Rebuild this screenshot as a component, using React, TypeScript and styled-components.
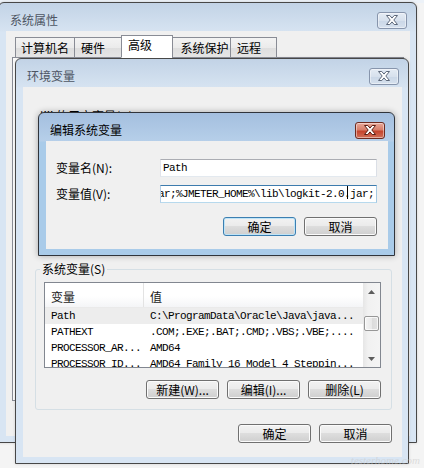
import React from "react";
import styled, { createGlobalStyle } from "styled-components";

const GlobalStyle = createGlobalStyle`
  html, body {
    margin: 0;
    padding: 0;
    background: #f4f4f4;
  }
  body {
    font-family: "Noto Sans CJK SC", "Liberation Sans", sans-serif;
    font-size: 12px;
    color: #000;
  }
  * {
    box-sizing: border-box;
  }
`;

const MONO = `"Liberation Mono", "DejaVu Sans Mono", monospace`;

const Desktop = styled.div`
  position: relative;
  width: 424px;
  height: 468px;
  overflow: hidden;
  background: linear-gradient(#edf2f8 0, #edf2f8 3px, #f4f4f4 3px);
`;

// windows sit on a free canvas, so they are placed by coordinates
const Frame = styled.div<{ $x: number; $y: number; $w: number; $h: number; $active?: boolean }>`
  position: absolute;
  left: ${(p) => p.$x}px;
  top: ${(p) => p.$y}px;
  width: ${(p) => p.$w}px;
  height: ${(p) => p.$h}px;
  display: flex;
  flex-direction: column;
  padding: 0 6px 6px 7px;
  border: 1px solid ${(p) => (p.$active ? "#30343b" : "#474747")};
  border-radius: 6px 6px 0 0;
  background: ${(p) =>
    p.$active
      ? "linear-gradient(#a4bfdf 0, #b6cfe9 28px, #a9cbe9 29px, #a9cbe9 100%)"
      : "linear-gradient(#c2d3e6 0, #d6e3f1 28px, #d8e5f3 29px, #d8e5f3 100%)"};
  box-shadow: ${(p) => (p.$active ? "0 0 6px rgba(0, 0, 0, 0.3)" : "0 0 3px rgba(0, 0, 0, 0.15)")};
`;

const TitleBar = styled.div`
  flex: none;
  height: 28px;
  display: flex;
  align-items: center;
  justify-content: space-between;
  padding: 6px 3px 0 4px;
`;

const Title = styled.span<{ $active?: boolean }>`
  font-size: 12px;
  line-height: 14px;
  color: ${(p) => (p.$active ? "#000" : "#4d5563")};
`;

const CloseBtn = styled.div<{ $active?: boolean }>`
  width: 30px;
  height: 17px;
  display: flex;
  align-items: center;
  justify-content: center;
  border-radius: 3px;
  border: 1px solid ${(p) => (p.$active ? "#6d2a1f" : "#8795ac")};
  background: ${(p) =>
    p.$active
      ? "linear-gradient(#e8a899 0, #d77e6a 45%, #c5442d 55%, #d0705a 100%)"
      : "linear-gradient(#e4ebf4 0, #d7e1ed 50%, #cad7e7 51%, #d6e1ee 100%)"};
  box-shadow: inset 0 0 0 1px rgba(255, 255, 255, 0.45);
`;

const Client = styled.div`
  flex: 1;
  min-height: 0;
  display: flex;
  flex-direction: column;
  overflow: hidden;
  background: #f0f0f0;
`;

/* ---- 系统属性 ---- */

const TabRow = styled.div`
  position: relative;
  z-index: 1;
  display: flex;
  align-items: flex-end;
  height: 23px;
  margin: 4px 0 -1px 9px;
`;

const Tab = styled.div<{ $w: number; $selected?: boolean }>`
  width: ${(p) => p.$w}px;
  height: ${(p) => (p.$selected ? 23 : 21)}px;
  display: flex;
  align-items: center;
  justify-content: ${(p) => (p.$w > 55 ? "center" : "flex-start")};
  padding: 0 0 ${(p) => (p.$selected ? 3 : 0)}px 6px;
  margin-left: -1px;
  border: 1px solid #898c95;
  border-bottom-color: ${(p) => (p.$selected ? "#fff" : "#898c95")};
  background: ${(p) => (p.$selected ? "#fff" : "linear-gradient(#f3f3f3, #ebebeb 50%, #dedede 51%, #e5e5e5)")};
  font-size: 12px;
  line-height: 14px;
  &:first-child {
    margin-left: 0;
    padding-left: 0;
  }
`;

const TabPanel = styled.div`
  height: 344px;
  margin: 0 6px;
  border: 1px solid #898c95;
  background: #fcfcfc;
`;

/* ---- 环境变量 ---- */

const EnvBody = styled.div`
  display: flex;
  flex-direction: column;
  padding: 22px 10px 0 12px;
`;

const UserSection = styled.div`
  height: 153px;
  padding-left: 5px;
  font-size: 12px;
  line-height: 14px;
`;

const Group = styled.fieldset`
  margin: 0;
  min-width: 0;
  padding: 6px 10px 10px 8px;
  border: 1px solid #d5dfe5;
  border-radius: 3px;
`;

const GroupLegend = styled.legend`
  margin-left: -4px;
  padding: 0 2px;
  font-size: 12px;
  line-height: 14px;
`;

const ListView = styled.div`
  height: 86px;
  display: flex;
  border: 1px solid #828790;
  background: #fff;
  overflow: hidden;
`;

const ListMain = styled.div`
  flex: 1;
  min-width: 0;
  display: flex;
  flex-direction: column;
`;

const HeaderRow = styled.div`
  flex: none;
  height: 25px;
  display: grid;
  grid-template-columns: 99px 1fr;
  background: linear-gradient(#fff 0, #fff 55%, #f4f5f7 100%);
  border-bottom: 1px solid #eaeaea;
`;

const HeaderCell = styled.div`
  display: flex;
  align-items: center;
  padding: 2px 0 0 6px;
  font-size: 12px;
  color: #1a1a1a;
  &:first-child {
    border-right: 1px solid #e3e3e3;
  }
`;

const Row = styled.div<{ $selected?: boolean }>`
  flex: none;
  height: 16px;
  display: grid;
  grid-template-columns: 99px 1fr;
  background: ${(p) => (p.$selected ? "#ededed" : "transparent")};
`;

const Cell = styled.div`
  padding-left: 6px;
  font-family: ${MONO};
  font-size: 11px;
  letter-spacing: -0.6px;
  line-height: 16px;
  white-space: nowrap;
  overflow: hidden;
`;

const ScrollBar = styled.div`
  flex: none;
  width: 17px;
  display: flex;
  flex-direction: column;
  background: linear-gradient(90deg, #e6e6e6, #f1f1f1 30%, #f4f4f4);
`;

const Arrow = styled.div`
  flex: none;
  height: 17px;
  display: flex;
  align-items: center;
  justify-content: center;
`;

const Track = styled.div`
  flex: 1;
`;

const Thumb = styled.div<{ $offset: number }>`
  height: 15px;
  margin: ${(p) => p.$offset}px 1px 0;
  border: 1px solid #979797;
  border-radius: 2px;
  background: linear-gradient(90deg, #f4f4f4, #e9e9e9 50%, #dbdbdb 51%, #e2e2e2);
  box-shadow: inset 0 0 0 1px rgba(255, 255, 255, 0.7);
`;

const ButtonRow = styled.div<{ $top: number }>`
  display: flex;
  justify-content: flex-end;
  gap: 8px;
  margin-top: ${(p) => p.$top}px;
`;

const PushButton = styled.button<{ $default?: boolean }>`
  width: 73px;
  height: 19px;
  padding: 0;
  display: flex;
  align-items: center;
  justify-content: center;
  border: 1px solid ${(p) => (p.$default ? "#3c7fb1" : "#707070")};
  border-radius: 3px;
  background: linear-gradient(#f2f2f2 0%, #ebebeb 45%, #dddddd 50%, #cfcfcf 100%);
  box-shadow: inset 0 0 0 1px ${(p) => (p.$default ? "#bfe4f7" : "#fbfbfb")};
  font-family: "Noto Sans CJK SC", sans-serif;
  font-size: 12px;
  line-height: 14px;
  color: #000;
`;

/* ---- 编辑系统变量 ---- */

const EditBody = styled.div`
  display: flex;
  flex-direction: column;
  gap: 8px;
  padding: 18px 11px 0 10px;
`;

const FieldRow = styled.div`
  display: flex;
  align-items: center;
`;

const FieldLabel = styled.span`
  width: 104px;
  font-size: 12px;
  line-height: 14px;
`;

const TextBox = styled.div<{ $focused?: boolean }>`
  width: 217px;
  height: 18px;
  padding-left: 2px;
  border: 1px solid;
  border-color: ${(p) => (p.$focused ? "#3d7bad #a4c9e3 #b7d9ed #b5cfe7" : "#abadb3 #dbdfe6 #e3e9ef #e2e3ea")};
  background: #fff;
  font-family: ${MONO};
  font-size: 11px;
  letter-spacing: -0.6px;
  line-height: 16px;
  white-space: nowrap;
  overflow: hidden;
`;

const ScrolledText = styled.span`
  margin-left: -5px;
`;

const Caret = styled.span`
  display: inline-block;
  width: 1px;
  height: 13px;
  margin: 0 -4px 0 3px;
  vertical-align: -2px;
  background: #000;
`;

const Watermark = styled.div`
  position: absolute;
  right: 4px;
  bottom: 2px;
  font-family: "Liberation Serif", serif;
  font-style: italic;
  font-size: 11px;
  color: rgba(200, 200, 200, 0.55);
`;

const CloseGlyph = ({ active }: { active?: boolean }) => (
  <svg width="12" height="10" viewBox="0 0 12 10">
    <path
      d="M0.5 0.5h3.3l2.2 2.6 2.2-2.6h3.3l-3.7 4.5 3.7 4.5h-3.3l-2.2-2.6-2.2 2.6h-3.3l3.7-4.5z"
      fill="#fff"
      stroke={active ? "#5a1d13" : "#5d687a"}
      strokeWidth="1"
      strokeLinejoin="round"
    />
  </svg>
);

const ArrowGlyph = ({ down }: { down?: boolean }) => (
  <svg width="7" height="4" viewBox="0 0 7 4">
    <path d={down ? "M0 0h7L3.5 4z" : "M3.5 0L7 4H0z"} fill="#5c5c5c" />
  </svg>
);

type WinProps = {
  x: number;
  y: number;
  w: number;
  h: number;
  title: string;
  active?: boolean;
  children?: React.ReactNode;
};

const Window = ({ x, y, w, h, title, active, children }: WinProps) => (
  <Frame $x={x} $y={y} $w={w} $h={h} $active={active}>
    <TitleBar>
      <Title $active={active}>{title}</Title>
      <CloseBtn $active={active}>
        <CloseGlyph active={active} />
      </CloseBtn>
    </TitleBar>
    <Client>{children}</Client>
  </Frame>
);

const tabs = [
  { label: "计算机名", w: 60 },
  { label: "硬件", w: 48 },
  { label: "高级", w: 52, selected: true },
  { label: "系统保护", w: 59 },
  { label: "远程", w: 47 },
];

const sysVars = [
  { name: "Path", value: "C:\\ProgramData\\Oracle\\Java\\java...", selected: true },
  { name: "PATHEXT", value: ".COM;.EXE;.BAT;.CMD;.VBS;.VBE;...." },
  { name: "PROCESSOR_AR...", value: "AMD64" },
  { name: "PROCESSOR_ID...", value: "AMD64 Family 16 Model 4 Steppin..." },
];

const App = () => {
  return (
    <Desktop>
      <GlobalStyle />

      <Window x={-2} y={2} w={419} h={441} title="系统属性">
        <TabRow>
          {tabs.map((t) => (
            <Tab key={t.label} $w={t.w} $selected={t.selected}>
              {t.label}
            </Tab>
          ))}
        </TabRow>
        <TabPanel />
      </Window>

      <Window x={15} y={58} w={394} h={406} title="环境变量">
        <EnvBody>
          <UserSection>liji 的用户变量(U)</UserSection>
          <Group>
            <GroupLegend>系统变量(S)</GroupLegend>
            <ListView>
              <ListMain>
                <HeaderRow>
                  <HeaderCell>变量</HeaderCell>
                  <HeaderCell>值</HeaderCell>
                </HeaderRow>
                {sysVars.map((v) => (
                  <Row key={v.name} $selected={v.selected}>
                    <Cell>{v.name}</Cell>
                    <Cell>{v.value}</Cell>
                  </Row>
                ))}
              </ListMain>
              <ScrollBar>
                <Arrow>
                  <ArrowGlyph />
                </Arrow>
                <Track>
                  <Thumb $offset={16} />
                </Track>
                <Arrow>
                  <ArrowGlyph down />
                </Arrow>
              </ScrollBar>
            </ListView>
            <ButtonRow $top={12}>
              <PushButton>新建(W)...</PushButton>
              <PushButton>编辑(I)...</PushButton>
              <PushButton>删除(L)</PushButton>
            </ButtonRow>
          </Group>
          <ButtonRow $top={14}>
            <PushButton>确定</PushButton>
            <PushButton>取消</PushButton>
          </ButtonRow>
        </EnvBody>
      </Window>

      <Window x={38} y={112} w={357} h={144} title="编辑系统变量" active>
        <EditBody>
          <FieldRow>
            <FieldLabel>变量名(N):</FieldLabel>
            <TextBox>Path</TextBox>
          </FieldRow>
          <FieldRow>
            <FieldLabel>变量值(V):</FieldLabel>
            <TextBox $focused>
              <ScrolledText>
                {"ar;%JMETER_HOME%\\lib\\logkit-2.0"}
                <Caret />
                {".jar;"}
              </ScrolledText>
            </TextBox>
          </FieldRow>
          <ButtonRow $top={6}>
            <PushButton $default>确定</PushButton>
            <PushButton>取消</PushButton>
          </ButtonRow>
        </EditBody>
      </Window>

      <Watermark>testerhome.com</Watermark>
    </Desktop>
  );
};

export default App;
